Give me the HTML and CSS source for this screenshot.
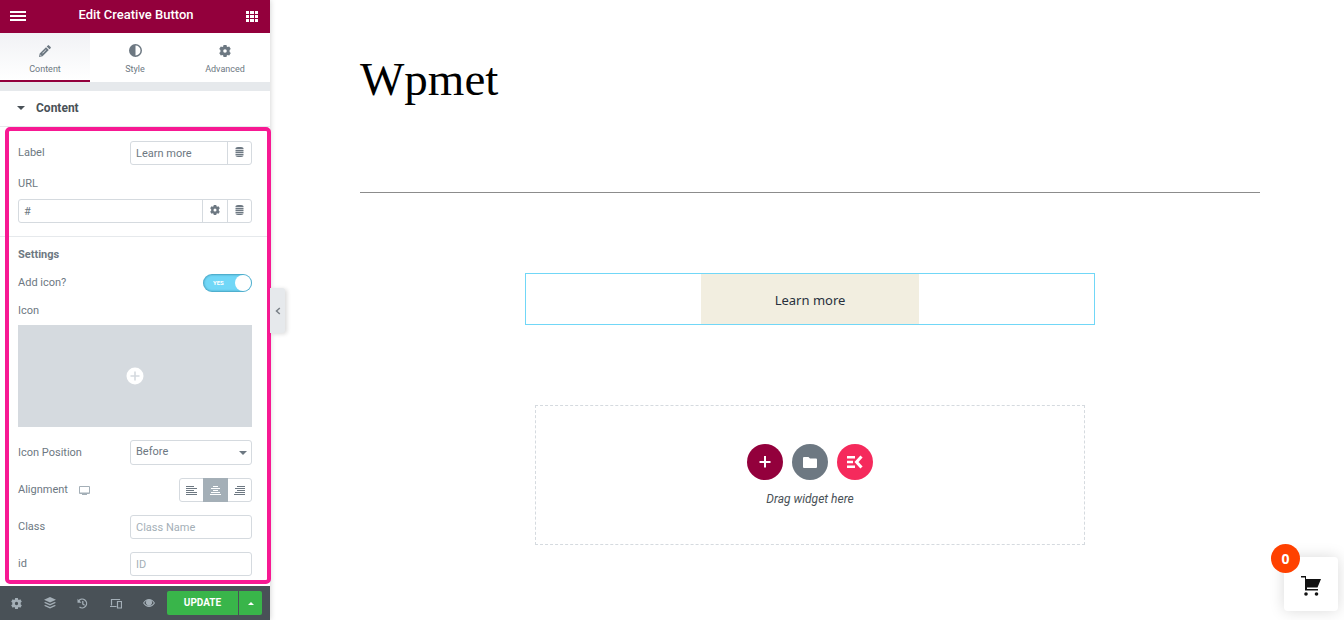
FILE: index.html
```html
<!DOCTYPE html>
<html lang="en">
<head>
  <meta charset="UTF-8">
  <title>Edit Creative Button</title>
  <link rel="stylesheet" href="styles.css">
</head>
<body>
  <!-- Shared icons -->
  <svg class="sprite" aria-hidden="true">
    <symbol id="gear" viewBox="0 0 12 12">
      <path fill-rule="evenodd" d="M4.500 0h3l.3 1.600.8.5L10.200 1.400l1.600 2.600L10.600 5v2l1.200 1-1.600 2.600-1.600-.7-.8.5L7.500 12h-3l-.3-1.600-.8-.5-1.600.7L.2 8 1.400 7V5L.2 4l1.600-2.600 1.600.7.8-.5zM6 4.200a1.800 1.800 0 1 0 0 3.600 1.800 1.800 0 0 0 0-3.600z"/>
    </symbol>
    <symbol id="database" viewBox="0 0 9 10">
      <path d="M.5 1.200C.5-.4 8.500-.4 8.500 1.200V2h-8zM.5 2.700h8v1.500h-8zM.5 4.800h8v1.500h-8zM.5 6.900h8v1.300h-8zM.5 8.800h8c0 1.600-8 1.600-8 0z"/>
    </symbol>
  </svg>

  <aside class="panel">
    <header class="panel-header">
      <button type="button" aria-label="Menu">
        <svg width="16" height="12" viewBox="0 0 16 12"><path d="M0 0h16v2H0zM0 4h16v2H0zM0 8h16v2H0z"/></svg>
      </button>
      <h1>Edit Creative Button</h1>
      <button type="button" aria-label="Widgets">
        <svg width="12" height="12" viewBox="0 0 12 12"><path d="M0 0h3v3H0zM4 0h4v3H4zM9 0h3v3H9zM0 4h3v3H0zM4 4h4v3H4zM9 4h3v3H9zM0 8h3v3H0zM4 8h4v3H4zM9 8h3v3H9z"/></svg>
      </button>
    </header>

    <nav class="tabs">
      <a class="tab active" href="#content">
        <svg width="12" height="12" viewBox="0 0 12 12"><path fill-rule="evenodd" d="M0 12l.7-3.500L7 2.200 9.800 5l-6.300 6.300zM7.700 1.500L8.800.4q.6-.6 1.200 0L11.600 2q.6.600 0 1.200l-1.100 1.100zM1.500 9.500l-.3 1.300 1.300-.3zM3.300 8l.4.4 3.600-3.600-.4-.4z"/></svg>
        <span>Content</span>
      </a>
      <a class="tab" href="#style">
        <svg width="13" height="13" viewBox="0 0 13 13"><path fill-rule="evenodd" d="M6.500 0a6.500 6.500 0 1 1 0 13 6.500 6.500 0 0 1 0-13zm0 1.500v10a5 5 0 0 0 0-10z"/></svg>
        <span>Style</span>
      </a>
      <a class="tab" href="#advanced">
        <svg width="12" height="12"><use href="#gear"/></svg>
        <span>Advanced</span>
      </a>
    </nav>

    <button type="button" class="section-toggle">
      <svg width="8" height="4" viewBox="0 0 8 4"><path d="M0 0h8L4 4z"/></svg>
      Content
    </button>

    <form class="controls" id="content">
      <div class="group">
        <div class="row">
          <label for="label">Label</label>
          <div class="field half">
            <input type="text" id="label" value="Learn more">
            <button type="button" aria-label="Dynamic tags"><svg width="9" height="10"><use href="#database"/></svg></button>
          </div>
        </div>
        <div class="stack">
          <label for="url">URL</label>
          <div class="field">
            <input type="text" id="url" value="#">
            <button type="button" aria-label="Link options"><svg width="10" height="10"><use href="#gear"/></svg></button>
            <button type="button" aria-label="Dynamic tags"><svg width="9" height="10"><use href="#database"/></svg></button>
          </div>
        </div>
      </div>

      <div class="group settings">
        <h2>Settings</h2>
        <div class="row switch-row">
          <label for="add-icon">Add icon?</label>
          <div class="switch">
            <input type="checkbox" id="add-icon" checked>
            <span>YES</span>
          </div>
        </div>
        <div class="stack">
          <label for="icon">Icon</label>
          <button type="button" class="picker" id="icon" aria-label="Choose icon">
            <svg width="18" height="18" viewBox="0 0 18 18"><circle cx="9" cy="9" r="8.500" fill="#fff"/><path d="M8.200 4.500h1.600v3.700h3.700v1.600H9.800v3.700H8.200V9.800H4.500V8.200h3.700z" fill="#d5dadf"/></svg>
          </button>
        </div>
        <div class="row">
          <label for="position">Icon Position</label>
          <div class="select half">
            <select id="position">
              <option>Before</option>
              <option>After</option>
            </select>
            <svg width="8" height="4" viewBox="0 0 8 4"><path d="M0 0h8L4 4z"/></svg>
          </div>
        </div>
        <div class="row">
          <span class="name">Alignment
            <svg width="11" height="9" viewBox="0 0 11 9"><path fill-rule="evenodd" d="M1 0h9q1 0 1 1v6q0 1-1 1H8v1H3V8H1Q0 8 0 7V1q0-1 1-1zm0 1v5.500h9V1z"/></svg>
          </span>
          <div class="align">
            <button type="button" aria-label="Left"><svg width="11" height="9" viewBox="0 0 11 9"><path d="M0 0h8v1H0zM0 2h11v1H0zM0 4h8v1H0zM0 6h11v1H0zM0 8h11v1H0z"/></svg></button>
            <button type="button" class="active" aria-label="Center"><svg width="11" height="9" viewBox="0 0 11 9"><path d="M3 0h5v1H3zM1 2h9v1H1zM3 4h5v1H3zM1 6h9v1H1zM0 8h11v1H0z"/></svg></button>
            <button type="button" aria-label="Right"><svg width="11" height="9" viewBox="0 0 11 9"><path d="M3 0h8v1H3zM1 2h10v1H1zM3 4h8v1H3zM1 6h10v1H1zM0 8h11v1H0z"/></svg></button>
          </div>
        </div>
        <div class="row">
          <label for="class">Class</label>
          <div class="field half"><input type="text" id="class" placeholder="Class Name"></div>
        </div>
        <div class="row">
          <label for="id">id</label>
          <div class="field half"><input type="text" id="id" placeholder="ID"></div>
        </div>
      </div>
      <div class="highlight"></div>
    </form>

    <footer class="panel-footer">
      <div class="tools">
        <button type="button" aria-label="Settings"><svg width="11" height="11"><use href="#gear"/></svg></button>
        <button type="button" aria-label="Navigator"><svg width="12" height="12" viewBox="0 0 12 12"><path d="M6 0l6 2.700-6 2.700-6-2.700zM1.500 4.900L6 6.900l4.500-2 1.500.8-6 2.700-6-2.700zM1.500 8L6 10l4.500-2 1.500.8-6 2.700-6-2.700z"/></svg></button>
        <button type="button" aria-label="History"><svg width="11" height="11" viewBox="0 0 11 11"><path d="M1.700 2.800A4.400 4.400 0 1 1 2.500 9M5.800 3v3l1.800 1.200" fill="none" stroke="currentColor" stroke-width="1.300"/><path d="M.5.700v4h4z"/></svg></button>
        <button type="button" aria-label="Responsive mode"><svg width="12" height="11" viewBox="0 0 12 11"><path d="M9.500 2V1.500H1.500v6M0 8.500h6.500M7.500 3.500h4v6.500h-4z" fill="none" stroke="currentColor" stroke-width="1.200"/></svg></button>
        <button type="button" aria-label="Preview"><svg width="12" height="8" viewBox="0 0 12 8"><path fill-rule="evenodd" d="M0 4q2.500-4 6-4t6 4q-2.500 4-6 4T0 4zm1.200 0Q3 6.900 6 6.900T10.800 4Q9.800 2.400 8.200 1.600A3 3 0 1 1 3.800 1.600Q2.200 2.400 1.200 4z"/><circle cx="6" cy="3.500" r="2.200"/></svg></button>
      </div>
      <div class="update">
        <button type="button">UPDATE</button>
        <button type="button" aria-label="Save options"><svg width="6" height="3" viewBox="0 0 6 3"><path d="M0 3h6L3 0z"/></svg></button>
      </div>
    </footer>

    <button type="button" class="collapse" aria-label="Hide panel">
      <svg width="6" height="8" viewBox="0 0 6 8"><path d="M4.800 1L1.500 4l3.300 3" fill="none" stroke="#7b8188" stroke-width="1.500"/></svg>
    </button>
  </aside>

  <main class="preview">
    <header class="site-header">
      <h2>Wpmet</h2>
    </header>
    <div class="widget">
      <a href="#">Learn more</a>
    </div>
    <section class="drop-area">
      <div class="actions">
        <button type="button" class="add" aria-label="Add section"><svg width="12" height="12" viewBox="0 0 12 12"><path d="M5 0h2v5h4.500v2H7v4.500H5V7H.5V5H5z"/></svg></button>
        <button type="button" class="folder" aria-label="Add template"><svg width="14" height="11" viewBox="0 0 14 11"><path d="M1 0h4.500L7 1.500h6q1 0 1 1V10q0 1-1 1H1q-1 0-1-1V1q0-1 1-1z"/></svg></button>
        <button type="button" class="kit" aria-label="ElementsKit"><svg width="16" height="14" viewBox="0 0 16 14"><path d="M0 1h8v2.600H0zM0 5.700h6v2.600H0zM0 10.400h8V13H0z"/><path d="M14.500 1.500L9.500 7l5 5.500" fill="none" stroke="currentColor" stroke-width="3"/></svg></button>
      </div>
      <p>Drag widget here</p>
    </section>
  </main>

  <button type="button" class="cart" aria-label="Cart">
    <svg width="20" height="20" viewBox="0 0 20 20"><path d="M0 0h5v3h15l-3.500 8.500H6v1.500h11v1.500H4V1.500H0z"/><circle cx="5" cy="18" r="1.800"/><circle cx="15.500" cy="18" r="1.800"/></svg>
    <span class="count">0</span>
  </button>
</body>
</html>
```

FILE: styles.css
```css
* { box-sizing: border-box; }
body { display: flex; min-height: 100vh; margin: 0; background: #fff; color: #6d7882; font-family: Roboto, sans-serif; font-size: 11px; line-height: 16px; }
h1, h2, p { margin: 0; }
button, input, select { font: inherit; color: inherit; margin: 0; }
button { display: flex; align-items: center; justify-content: center; padding: 0; border: 0; background: none; cursor: pointer; }
a { color: inherit; text-decoration: none; }
svg { display: block; flex: none; fill: currentColor; }
.sprite { position: absolute; width: 0; height: 0; }

/* Panel */
.panel { position: relative; display: flex; flex-direction: column; flex: none; width: 270px; min-height: 100vh; background: #fff; box-shadow: 0 0 6px rgba(0, 0, 0, .2); }
.panel-header { display: flex; align-items: center; justify-content: space-between; height: 33px; padding: 0 12px 0 10px; background: #93003c; color: #fff; }
.panel-header h1 { padding-bottom: 4px; font-size: 13px; font-weight: 500; }

.tabs { display: flex; height: 49px; }
.tab { display: flex; flex: 1; flex-direction: column; align-items: center; justify-content: flex-end; gap: 4px; padding-bottom: 5px; font-size: 9px; }
.tab.active { padding-bottom: 3px; border-bottom: 2px solid #93003c; background: linear-gradient(#f1f2f5, #fff); }

.section-toggle { justify-content: flex-start; gap: 11px; height: 45px; padding: 0 17px 2px; border-top: 9px solid #e6e9ec; border-bottom: 1px solid #e6e9ec; color: #495157; font-size: 12px; font-weight: 700; }

/* Controls */
.controls { position: relative; flex: 1; }
.group { display: flex; flex-direction: column; gap: 13px; padding: 14px 18px 13px; }
.group:first-child { gap: 12px; border-bottom: 1px solid #e6e9ec; }
.group h2 { font-size: 11px; font-weight: 700; line-height: 16px; }
.settings { padding: 10px 18px; }
.settings h2 { margin-bottom: -2px; }
.row { display: flex; align-items: center; justify-content: space-between; }
.stack { display: grid; gap: 8px; line-height: 14px; }
.settings .stack { line-height: 12px; }
.half { width: 122px; }
.name { display: flex; align-items: center; gap: 11px; }
.name svg { color: #a4afb7; }

.field { display: flex; height: 24px; border: 1px solid #d5dadf; border-radius: 3px; }
.field input { flex: 1; min-width: 0; padding: 2px 5px 0; border: 0; background: none; outline: 0; }
.field input::placeholder { color: #a4afb7; }
.field button { width: 25px; padding-bottom: 2px; border-left: 1px solid #d5dadf; }
.field button:last-child { width: 24px; }

.switch-row { height: 18px; }
.switch { position: relative; width: 49px; height: 18px; }
.switch input { appearance: none; display: block; width: 49px; height: 18px; border-radius: 9px; background: #71d7f7; box-shadow: inset 0 0 2px 1px rgba(0, 80, 110, .4); }
.switch input::after { content: ""; display: block; width: 16px; height: 16px; margin: 1px 1px 1px auto; border-radius: 50%; background: #fff; }
.switch span { position: absolute; top: 1px; left: 10px; color: #fff; font-size: 6px; font-weight: 700; line-height: 16px; pointer-events: none; }

.picker { height: 102px; background: #d5dadf; }
.select { position: relative; }
.select select { appearance: none; display: block; width: 100%; height: 25px; padding: 0 5px 2px; border: 1px solid #d5dadf; border-radius: 3px; background: #fff; }
.select svg { position: absolute; top: 11px; right: 5px; pointer-events: none; }

.align { display: flex; height: 24px; border: 1px solid #d5dadf; border-radius: 3px; }
.align button { width: 23px; }
.align .active { width: 25px; margin: -1px 0; background: #a4afb7; color: #fff; }

/* Pink frame over the settings */
.highlight { position: absolute; inset: 0 -1px 2px 5px; border: 4px solid #f71993; border-radius: 5px; pointer-events: none; }

/* Footer */
.panel-footer { display: flex; align-items: center; justify-content: space-between; height: 34px; padding: 0 8px 0 0; background: #495157; color: #a4afb7; }
.tools { display: flex; }
.tools button { width: 33px; height: 34px; }
.update { display: flex; gap: 1px; color: #fff; }
.update button { width: 23px; height: 24px; border-radius: 0 2px 2px 0; background: #39b54a; }
.update button:first-child { width: 71px; border-radius: 2px 0 0 2px; font-size: 10px; font-weight: 700; }

.collapse { position: absolute; top: 288px; left: 100%; width: 15px; height: 45px; border-radius: 0 3px 3px 0; background: #e6e9ec; box-shadow: 2px 1px 4px rgba(0, 0, 0, .15); }

/* Preview */
.preview { flex: 1; padding: 0 84px 0 90px; }
.site-header { height: 193px; padding-top: 50px; border-bottom: 1px solid #8c8c8c; }
.site-header h2 { color: #000; font-family: "Liberation Serif", serif; font-size: 47px; font-weight: 400; line-height: 58px; }
.widget { display: flex; justify-content: center; max-width: 570px; height: 52px; margin: 80px auto; border: 1px solid #71d7f7; }
.widget a { display: flex; align-items: center; justify-content: center; width: 218px; padding-top: 2px; background: #f2eee0; color: #28303d; font-family: "Noto Sans", sans-serif; font-size: 13px; }
.drop-area { display: flex; flex-direction: column; align-items: center; gap: 11px; max-width: 550px; height: 140px; margin: 0 auto; padding-top: 38px; border: 1px dashed #d5dadf; }
.drop-area p { color: #495157; font-size: 12px; font-style: italic; }
.actions { display: flex; gap: 9px; }
.actions button { width: 36px; height: 36px; border-radius: 50%; color: #fff; }
.actions .add { background: #93003c; }
.actions .folder { background: #6d7882; }
.actions .kit { background: #f52a5c; }

/* Floating cart */
.cart { position: fixed; right: 6px; bottom: 9px; width: 54px; height: 54px; padding-top: 4px; border-radius: 4px; background: #fff; box-shadow: 0 0 15px rgba(0, 0, 0, .15); color: #111; }
.count { position: absolute; top: -13px; left: -13px; width: 29px; height: 29px; border-radius: 50%; background: #ff4100; color: #fff; font-family: "Open Sans", sans-serif; font-size: 14px; font-weight: 700; line-height: 29px; }
```
